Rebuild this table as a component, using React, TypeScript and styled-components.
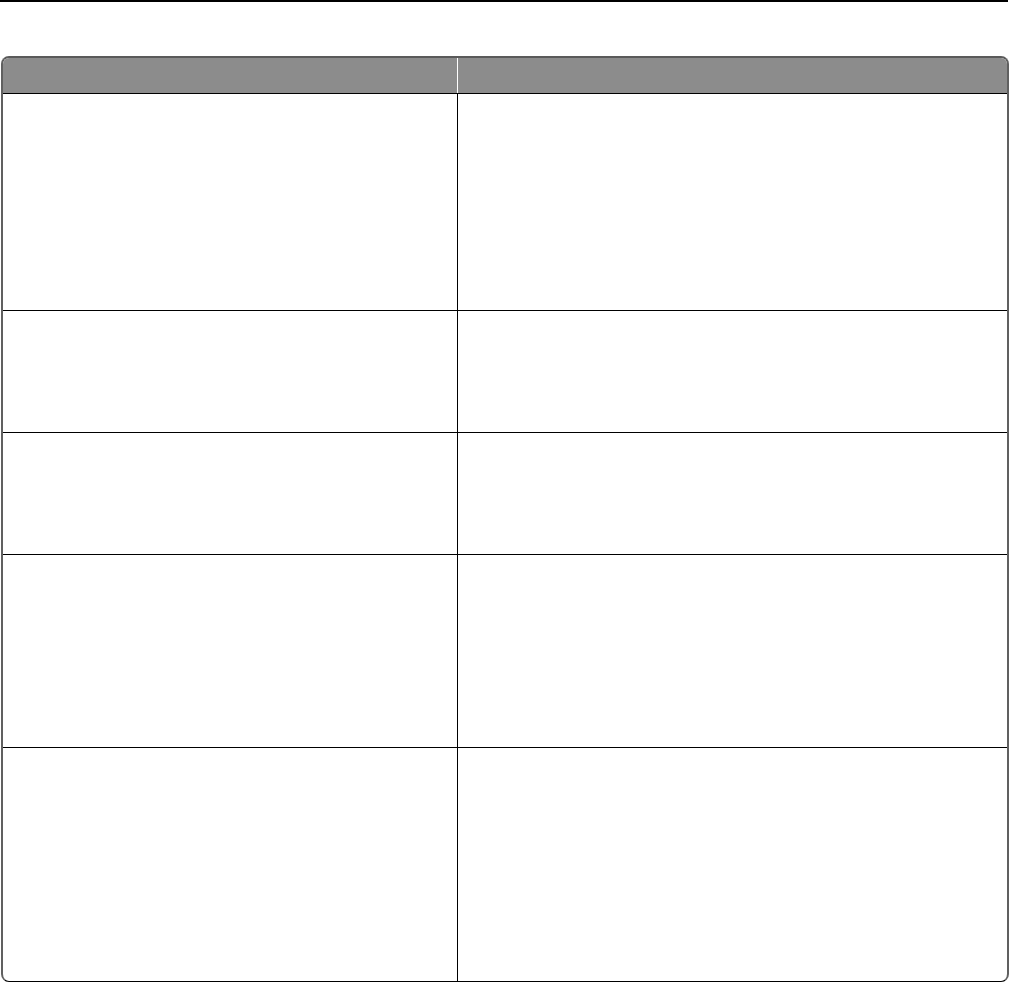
import React from "react";
import styled, { createGlobalStyle } from "styled-components";

const GlobalStyle = createGlobalStyle`
  * { box-sizing: border-box; }
  body {
    margin: 0;
    background: #ffffff;
    font-family: "Liberation Sans", Arial, sans-serif;
  }
`;

const Page = styled.div`
  width: 1010px;
  height: 983px;
  background: #fff;
`;

const Rule = styled.div`
  width: 1008px;
  height: 2px;
  background: #000;
`;

const Table = styled.div`
  margin: 54px 0 0 1px;
  width: 1008px;
  border-top: 2px solid #5a5a5a;
  border-left: 2px solid #606060;
  border-right: 2px solid #606060;
  border-bottom: 1px solid #000;
  border-radius: 8px;
  overflow: hidden;
`;

const HeaderRow = styled.div`
  display: grid;
  grid-template-columns: 454px 1px 1fr;
  height: 35px;
  background: #8c8c8c;
`;

const HeaderCell = styled.div`
  color: #fff;
  font-size: 14px;
  font-weight: bold;
`;

const Divider = styled.div<{ $light?: boolean }>`
  background: ${(p) => (p.$light ? "#ffffff" : "#000000")};
`;

const Row = styled.div<{ $h: number }>`
  display: grid;
  grid-template-columns: 454px 1px 1fr;
  height: ${(p) => p.$h}px;
  border-top: 1px solid #000;
`;

const Cell = styled.div`
  padding: 8px;
  font-size: 14px;
  color: #000;
`;

const rows = [217, 122, 122, 193, 234];

export default function App() {
  return (
    <Page>
      <GlobalStyle />
      <Rule />
      <Table>
        <HeaderRow>
          <HeaderCell />
          <Divider $light />
          <HeaderCell />
        </HeaderRow>
        {rows.map((h, i) => (
          <Row key={i} $h={h}>
            <Cell />
            <Divider />
            <Cell />
          </Row>
        ))}
      </Table>
    </Page>
  );
}
